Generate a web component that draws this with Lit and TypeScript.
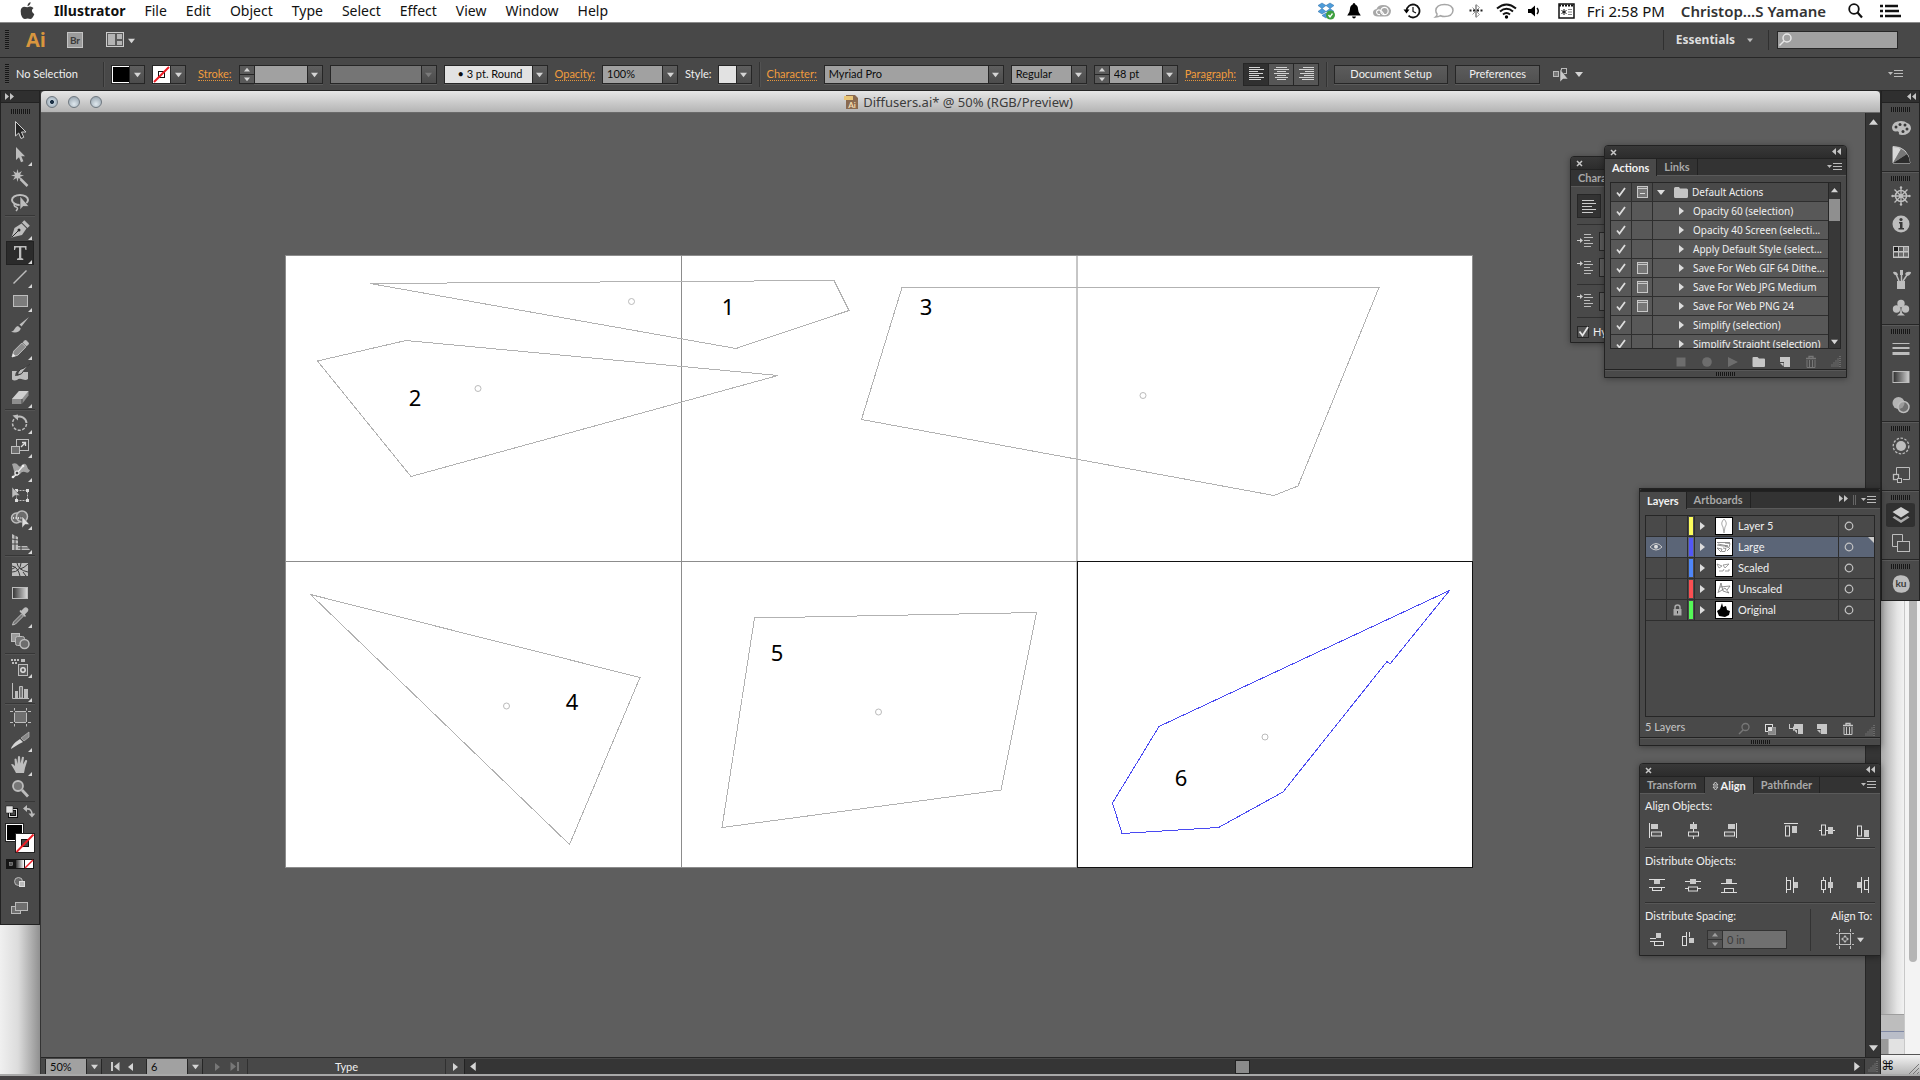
import { LitElement, html, svg, css, nothing, type TemplateResult, type SVGTemplateResult } from "lit";
import { customElement, property } from "lit/decorators.js";
import { classMap } from "lit/directives/class-map.js";

const L = "#bdbdbd";
const D = "#2b2b2b";

const ICONS: Record<string, SVGTemplateResult> = {
  select: svg`<path d="M7.5 2.5v14.500l3.200-3 2.300 5.500 2.800-1.200-2.300-5.300h4.500z" fill="#262626" stroke="#cfcfcf"/>`,
  direct: svg`<path d="M8 4v13l3-2.800 2 5 2.400-1-2.100-4.900H17z" fill="${L}"/>`,
  wand: svg`<path d="M9.500 2l1 4 3.500-2-2 3.500 4 1-4 1.200 2 3.300-3.500-2-1 4-1-4-3.500 2 2-3.500-4-1 4-1-2-3.500 3.500 2z" fill="${L}"/><path d="M12.500 12l7 7" stroke="${L}" stroke-width="2.500"/>`,
  lasso: svg`<ellipse cx="12" cy="9" rx="8" ry="5" fill="none" stroke="${L}" stroke-width="2"/><path d="M7 12q-2 3 1 4t0 4" fill="none" stroke="${L}" stroke-width="1.500"/><path d="M12 5v14l3-3.500h6z" fill="${L}" stroke="#3a3a3a" stroke-width=".6"/>`,
  pen: svg`<path d="M3.500 20.500L6.500 11l7-4.500 5 5-4.500 6.500z" fill="${L}"/><path d="M14 5.500l2.300-2.300 5.500 5.500-2.300 2.300z" fill="${L}"/><path d="M4 20l6.500-6.500" stroke="${D}"/><circle cx="11" cy="13" r="1.500" fill="${D}"/>`,
  type: svg`<path d="M6 5h12.500v4h-1l-.8-2.500h-3.400V17l2 .8V19H9v-1.200l2-.8V6.500H7.800L7 9H6z" fill="${L}"/>`,
  line: svg`<path d="M5.500 18.500l13-13" stroke="${L}" stroke-width="1.500"/>`,
  rect: svg`<rect x="5.500" y="6.500" width="14" height="11" fill="#7c7c7c" stroke="${L}"/>`,
  brush: svg`<path d="M21 4l-9.500 7.500 2 2z" fill="${L}"/><path d="M3 18.500c4 .2 3-4.500 7-5.500l2.800 2.500c-1 4.500-7 4.500-9.800 3z" fill="${L}"/>`,
  pencil: svg`<path d="M4 20l1.800-6 8-8 4 4-8 8.200z" fill="#8b8b8b" stroke="${L}"/><path d="M14.500 5.500l2-2q1-1 2 0l2 2q1 1 0 2l-2 2z" fill="${L}"/><path d="M4 20l1-3.500 2.600 2.600z" fill="#eee"/>`,
  blob: svg`<path d="M4 10h5q-2 2-2 5 5 0 8-4h5v7q-2 1.500-5 .5-4-1.500-6 .5-3 1-5-.5z" fill="${L}"/><path d="M22 3l-6 4q-4 1-5 3-1 1-1.500 4 5-.5 6-4z" fill="${L}" stroke="#3a3a3a"/>`,
  eraser: svg`<path d="M4 14L11 6h9.500v4.500L14 19H4z" fill="#8e8e8e"/><path d="M4 14L11 6h9.500L14 14z" fill="#cfcfcf"/><path d="M14 14v5" stroke="#444"/>`,
  rotate: svg`<path d="M8 6.500a7 7 0 0 1 10.500 5.500" fill="none" stroke="${L}" stroke-width="2"/><path d="M18.500 13A7 7 0 1 1 7 7" fill="none" stroke="${L}" stroke-width="1.500" stroke-dasharray="3 1.500"/><path d="M4.500 4.500l5.500-1v6z" fill="${L}"/>`,
  scale: svg`<rect x="8.500" y="4.500" width="12" height="11" fill="none" stroke="${L}"/><rect x="3.500" y="11.500" width="8" height="7" fill="#6d6d6d" stroke="${L}"/><path d="M13 12l4-4M14 7.500h3.500V11" fill="none" stroke="#ddd" stroke-width="1.300"/>`,
  warp: svg`<path d="M4 5q4-2 6 1 2 3 4 0 3-3 5 1 1 4 3 4-1 4-5 2-3-1-5 2-3 3-7 2 2-2 1-5-1-4-2-7z" fill="#a4a4a4"/><path d="M4 18q2 1 5-4l6-7" fill="none" stroke="#f0f0f0" stroke-width="1.200"/><circle cx="9" cy="14" r="2" fill="#444" stroke="#fff"/><circle cx="15" cy="7" r="1.300" fill="#eee"/><circle cx="5" cy="18" r="1.300" fill="#eee"/>`,
  free: svg`<rect x="8.500" y="7.500" width="11" height="10" fill="none" stroke="${L}" stroke-dasharray="2 1"/><path d="M7 6h3v3H7zM18 6h3v3h-3zM18 16h3v3h-3zM7 16h3v3H7z" fill="#ddd"/><path d="M4 4v11l3-2.500h5z" fill="${L}" stroke="#444" stroke-width=".5"/>`,
  builder: svg`<circle cx="8.500" cy="11" r="5" fill="#6d6d6d" stroke="${L}" stroke-width="1.500"/><circle cx="14" cy="9.500" r="5.500" fill="#6d6d6d" stroke="${L}" stroke-width="1.500"/><path d="M5 11h9" stroke="#fff" stroke-dasharray="1 1.500" stroke-width="1.500"/><path d="M14 9v12l3-3.500h4.500z" fill="#ddd" stroke="#444" stroke-width=".5"/>`,
  perspective: svg`<path d="M4 3l6 3v9h9l3 4H4z" fill="${L}"/><path d="M7 4v15M4 8l6 1M4 13h6M13 15v4M10 17h11" stroke="#474747"/>`,
  mesh: svg`<rect x="4" y="6" width="16" height="13" fill="${L}"/><path d="M4 9q6 1 8 10M4 15q8 0 9-9M9 6q1 7 11 9M12 12q4-1 8-5M8 10l-4 2M15 15l3 4" fill="none" stroke="#3c3c3c"/>`,
  gradient: svg`<defs><linearGradient id="g"><stop offset="0" stop-color="#333"/><stop offset="1" stop-color="#ddd"/></linearGradient></defs><rect x="4.500" y="6.500" width="15" height="11" fill="url(#g)" stroke="${L}"/>`,
  eyedrop: svg`<path d="M4.500 20l1-3 8-8 2 2-8 8z" fill="#777" stroke="${L}"/><path d="M12 7l5 5 1-1-1.200-1.400 3-3q1.500-2-.3-3.600t-3.500 0l-2.700 2.700L12.500 5l-1 1z" fill="${L}"/>`,
  blend: svg`<rect x="3.500" y="4.500" width="8" height="8" fill="#9a9a9a" stroke="${L}"/><rect x="7.500" y="7.500" width="9" height="9" rx="2" fill="#777" stroke="${L}"/><circle cx="16.500" cy="15" r="4.500" fill="#6d6d6d" stroke="${L}" stroke-width="1.500"/>`,
  spray: svg`<path d="M3 4h2v2H3zM6 4h2v2H6zM9 4h2v2H9zM4 7h2v2H4zM7 7h2v2H7zM13 4h4v3h-4z" fill="${L}"/><rect x="10.500" y="9.500" width="9" height="11" fill="#5a5a5a" stroke="${L}"/><circle cx="15" cy="15" r="2.200" fill="none" stroke="#ddd" stroke-width="1.500"/>`,
  graph: svg`<path d="M4.500 4v15.500H21" fill="none" stroke="${L}"/><path d="M7 12h3v7H7zM16 10h4v9h-4z" fill="${L}"/><path d="M11.500 7.500h3V19h-3z" fill="#7b7b7b" stroke="${L}"/>`,
  artboard: svg`<rect x="6" y="7" width="13" height="10" fill="#6f6f6f"/><path d="M2 6.500h3M7 6.500h11M20 6.500h3M2 17.500h3M7 17.500h11M20 17.500h3M6.500 3v2.500M6.500 8v9M6.500 19v2.500M18.500 3v2.500M18.500 8v9M18.500 19v2.500" stroke="${L}"/>`,
  slice: svg`<path d="M21 3v5l-5 4-3-3z" fill="#888" stroke="${L}" stroke-width=".7"/><path d="M12 10l3 3-4 2-8 5q1-5 9-10z" fill="#d5d5d5"/>`,
  hand: svg`<path d="M8 20Q5 14 3 11.500q1.500-1.300 4 1.500L6.500 6q1.300-1.200 2 0l1 5L10 3.500q1-1 2 0l.5 7 1.500-6.500q1.200-.8 2 .3L15 11.500l2.500-4.500q1.500-.4 1.700 1L17 15l-1 5z" fill="${L}"/>`,
  zoom: svg`<circle cx="10" cy="9" r="5" fill="#777" stroke="${L}" stroke-width="1.800"/><path d="M14 13l6 6.500" stroke="${L}" stroke-width="2.800"/>`,

  palette: svg`<path d="M3 12q1-6 9-6 4 0 6 2 4 1 4 6-2 6-9 6-4 0-3-2.500-1-2-3-1-4 0-4-4.500z" fill="${L}"/><g fill="#3a3a3a"><circle cx="7" cy="12" r="1.500"/><circle cx="11" cy="9.500" r="1.500"/><circle cx="16" cy="10" r="1.500"/><circle cx="18" cy="14" r="1.500"/><circle cx="14" cy="16.500" r="1.500"/></g>`,
  guide: svg`<path d="M4 20V3.500q15 0 17 16.500z" fill="#8a8a8a" stroke="#ccc"/><path d="M4 20V4q5 0 8 2z" fill="#d8d8d8"/><path d="M4 20L18 11q3 4 3 9z" fill="#2c2c2c"/><path d="M4 20L12 6q4 2 6 5z" fill="#777"/>`,
  wheel: svg`<circle cx="12" cy="12" r="5.500" fill="none" stroke="${L}" stroke-width="1.500"/><circle cx="12" cy="12" r="2" fill="${L}"/><path d="M12 3v18M3 12h18M5.500 5.500l13 13M18.500 5.500l-13 13" stroke="${L}" stroke-width="1.300"/><g fill="${L}"><circle cx="12" cy="3.500" r="1.200"/><circle cx="12" cy="20.500" r="1.200"/><circle cx="3.500" cy="12" r="1.200"/><circle cx="20.500" cy="12" r="1.200"/></g>`,
  info: svg`<circle cx="12" cy="12" r="8.500" fill="${L}"/><path d="M10 10h3.500v6H15v1.500H9.500V16H11v-4.500h-1z" fill="#3a3a3a"/><circle cx="12" cy="7.500" r="1.600" fill="#3a3a3a"/>`,
  swatches: svg`<rect x="4" y="6" width="16" height="12" fill="#c4c4c4"/><path d="M5 7h4v4H5z" fill="#1c1c1c"/><path d="M10 7h4v4h-4zM5 12.500h4v4H5z" fill="#555"/><path d="M15 7h4v4h-4z" fill="#909090"/><path d="M10 12.500h4v4h-4zM15 12.500h4v4h-4z" fill="#6b6b6b"/>`,
  brushes: svg`<path d="M8 13h8v8H8z" fill="${L}"/><path d="M10 13L7 6M12.500 13V5M14 13l4-6" stroke="${L}" stroke-width="1.500"/><path d="M4 4q4-1 5 3-4 1-5-3zM11 2h3v5h-3zM16 6q1-3 6-2 0 3-4 4z" fill="${L}"/>`,
  club: svg`<g fill="${L}"><circle cx="12" cy="7.500" r="3.700"/><circle cx="7.500" cy="13" r="3.700"/><circle cx="16.500" cy="13" r="3.700"/><path d="M12 9l1 8 3 2.500H8l3-2.500z"/></g>`,
  stroke: svg`<path d="M3.500 6h17v1h-17zM3.500 10h17v2h-17zM3.500 15h17v3h-17z" fill="${L}"/>`,
  gradient2: svg`<defs><linearGradient id="h"><stop offset="0" stop-color="#2c2c2c"/><stop offset="1" stop-color="#cfcfcf"/></linearGradient></defs><rect x="4" y="6.500" width="16" height="11" fill="url(#h)" stroke="${L}"/>`,
  circles: svg`<circle cx="9.500" cy="10" r="6" fill="#b4b4b4"/><circle cx="14.500" cy="14" r="5.500" fill="#8b8b8b" fill-opacity=".6" stroke="${L}" stroke-width="1.500"/>`,
  appearance: svg`<circle cx="12" cy="12" r="5" fill="${L}"/><circle cx="12" cy="12" r="7.800" fill="none" stroke="${L}" stroke-width="1.300" stroke-dasharray="2.500 1.500"/>`,
  styles: svg`<path d="M7.500 12V5.500h13v12H14" fill="none" stroke="${L}"/><rect x="4.500" y="12.500" width="5" height="5" fill="#444" stroke="${L}" stroke-width="1.300"/><rect x="8.500" y="16.500" width="4" height="4" fill="#444" stroke="${L}"/>`,
  layers: svg`<path d="M12 4l8.500 5L12 14.500 3.500 9z" fill="#cfcfcf"/><path d="M5.500 13l6.500 4 6.500-4 2 1.500L12 20 3.500 14.500z" fill="#a9a9a9"/>`,
  artboards: svg`<path d="M8 15.500H3.500v-12h10V10" fill="none" stroke="${L}"/><rect x="8.500" y="10.500" width="12" height="10" fill="none" stroke="${L}"/>`,
  ku: svg`<path d="M3 12q0-9 8-9.500 9-.5 10.500 8 1 10-8.500 11Q3.500 22 3 12z" fill="${L}"/><text x="12" y="15.500" text-anchor="middle" font-family="Lato, sans-serif" font-weight="700" font-size="11" fill="#3a3a3a">ku</text>`,

  al: svg`<path d="M4.500 5v15" stroke="#ddd"/><rect x="6" y="6" width="7" height="5" fill="#c9c9c9"/><rect x="6.500" y="14" width="10" height="4" fill="#555" stroke="#ddd"/>`,
  ac: svg`<path d="M12.500 4v17" stroke="#ddd"/><rect x="9" y="6" width="7" height="5" fill="#c9c9c9"/><rect x="7.500" y="14" width="10" height="4" fill="#444" stroke="#ddd"/>`,
  ar: svg`<path d="M19.500 5v15" stroke="#ddd"/><rect x="11" y="6" width="7" height="5" fill="#c9c9c9"/><rect x="7.500" y="14" width="10" height="4" fill="#555" stroke="#ddd"/>`,
  at: svg`<path d="M5 5.500h14" stroke="#ddd"/><rect x="6.500" y="8" width="4" height="10" fill="#444" stroke="#ddd"/><rect x="13" y="8" width="5" height="7" fill="#c9c9c9"/>`,
  am: svg`<path d="M4 12.500h16" stroke="#ddd"/><rect x="6.500" y="7" width="4" height="10" fill="#444" stroke="#ddd"/><rect x="13" y="9" width="5" height="7" fill="#c9c9c9"/>`,
  ab: svg`<path d="M5 20.500h14" stroke="#ddd"/><rect x="6.500" y="8" width="4" height="10" fill="#444" stroke="#ddd"/><rect x="13" y="12" width="5" height="7" fill="#c9c9c9"/>`,
  dt: svg`<path d="M4 6.500h16M4 14.500h16" stroke="#ddd"/><rect x="9" y="7" width="6" height="4" fill="#c9c9c9"/><rect x="7.500" y="14.500" width="9" height="3" fill="#444" stroke="#ddd"/>`,
  dm: svg`<path d="M4 8.500h16M4 15.500h16" stroke="#ddd"/><rect x="9" y="6" width="6" height="5" fill="#c9c9c9"/><rect x="7.500" y="14" width="9" height="4" fill="#444" stroke="#ddd"/>`,
  db: svg`<path d="M4 10.500h16M4 19.500h16" stroke="#ddd"/><rect x="9" y="6" width="6" height="4" fill="#c9c9c9"/><rect x="7.500" y="15.500" width="9" height="4" fill="#444" stroke="#ddd"/>`,
  dl: svg`<path d="M7.500 4v16M14.500 4v16" stroke="#ddd"/><rect x="7.500" y="7.500" width="4" height="9" fill="#444" stroke="#ddd"/><rect x="15" y="9" width="4" height="6" fill="#c9c9c9"/>`,
  dc: svg`<path d="M8.500 4v16M15.500 4v16" stroke="#ddd"/><rect x="6.500" y="7.500" width="4" height="9" fill="#444" stroke="#ddd"/><rect x="13" y="9" width="5" height="6" fill="#c9c9c9"/>`,
  dr: svg`<path d="M10.500 4v16M17.500 4v16" stroke="#ddd"/><rect x="6" y="9" width="4" height="6" fill="#c9c9c9"/><rect x="13.500" y="7.500" width="4" height="9" fill="#444" stroke="#ddd"/>`,
  sv: svg`<path d="M5 11.500h6M5 14.500h4" stroke="#ddd"/><rect x="11" y="6" width="5" height="5" fill="#c9c9c9"/><rect x="9.500" y="14.500" width="9" height="4" fill="#444" stroke="#ddd"/>`,
  sh: svg`<path d="M10.500 5v5M13.500 5v5" stroke="#ddd"/><rect x="6.500" y="9.500" width="4" height="9" fill="#444" stroke="#ddd"/><rect x="13" y="11" width="5" height="5" fill="#c9c9c9"/>`,
  ato: svg`<rect x="6.500" y="6.500" width="11" height="11" fill="none" stroke="${L}"/><path d="M6.500 2v3M17.500 2v3M6.500 19v3M17.500 19v3M3 6.500h2M19 6.500h2M3 17.500h2M19 17.500h2" stroke="${L}"/><path d="M12 8l-2 2.500h4zM12 16l-2-2.500h4zM8 12l2.500-2v4zM16 12l-2.500-2v4z" fill="${L}"/>`,

  stop: svg`<rect x="7.500" y="7.500" width="9" height="9" fill="#6d6d6d"/>`,
  record: svg`<circle cx="12" cy="12" r="4.800" fill="#6d6d6d"/>`,
  play: svg`<path d="M7 7l10 5-10 5z" fill="#6d6d6d"/>`,
  folder: svg`<path d="M5.500 8q0-1 1-1h4l1.500 1.500h5q1 0 1 1V16q0 1-1 1H6.500q-1 0-1-1z" fill="#c6c6c6"/>`,
  page: svg`<path d="M7 7h10v10h-6v-5H7z" fill="#c6c6c6"/><path d="M7 13l3.500 3.500V13z" fill="#c6c6c6"/>`,
  sub: svg`<path d="M10 7h9v10h-5v-5h-4z" fill="#c6c6c6"/><path d="M10 13l3 3.500V13zM5 7h1v4h3V9l3 3-3 2v-2H5z" fill="#c6c6c6"/>`,
  trash: svg`<path d="M7 8.500h10M10 8V6.500h4V8" fill="none" stroke="currentColor" stroke-width="1.300"/><path d="M8 10v7.500h8V10M10.500 10v7M13.500 10v7" fill="none" stroke="currentColor"/>`,
  find: svg`<circle cx="13.500" cy="10" r="3.500" fill="none" stroke="#777" stroke-width="1.300"/><path d="M11 13l-4 4" stroke="#777" stroke-width="1.500"/>`,
  mask: svg`<rect x="7.500" y="7.500" width="7" height="7" fill="#444" stroke="#ddd"/><rect x="10.500" y="10.500" width="7" height="7" fill="#888" stroke="#999"/><rect x="10" y="10" width="4" height="4" fill="#ddd"/>`,
};

const icon = (name: string, size = 24) =>
  html`<svg width=${size} height=${size} viewBox="0 0 24 24" aria-hidden="true">${ICONS[name]}</svg>`;

const tri = (dir: "down" | "up" | "left" | "right", w = 8, color = "#d5d5d5") => {
  const p = { down: "0,2 8,2 4,7", up: "0,6 8,6 4,1", left: "6,0 6,8 1,4", right: "2,0 2,8 7,4" }[dir];
  return html`<svg width=${w} height=${w} viewBox="0 0 8 8" aria-hidden="true"><polygon points=${p} fill=${color} /></svg>`;
};

const chevrons = (flip: boolean) =>
  html`<svg width="9" height="8" viewBox="0 0 9 8" aria-hidden="true">
    <path d=${flip ? "M4 0v7L0 3.500zM9 0v7L5 3.500z" : "M0 0v7l4-3.500zM5 0v7l4-3.500z"} fill="#c4c4c4" />
  </svg>`;
const closeX = html`<svg width="7" height="7" viewBox="0 0 7 7" aria-hidden="true"><path d="M1 1l5 5M6 1L1 6" stroke="#c8c8c8" stroke-width="1.500" /></svg>`;
const menuIcon = html`<svg width="15" height="10" viewBox="0 0 15 10" aria-hidden="true">
  <path d="M0 3h5L2.500 6z" fill="#bbb" /><path d="M6 1.500h9M6 4.500h9M6 7.500h9" stroke="#bbb" />
</svg>`;
const resizeGrip = html`<svg width="11" height="11" viewBox="0 0 11 11" aria-hidden="true">
  <path d="M10 0v11M8 2.500V11M6 4.500V11M4 6.500V11M2 8.500V11" stroke="#8c8c8c" stroke-dasharray="1 1" />
</svg>`;

const shared = css`
  * { box-sizing: border-box; }
  button { font: inherit; color: inherit; background: none; border: 0; padding: 0; margin: 0; display: grid; place-items: center; }
  svg { display: block; flex: none; }
  ul { list-style: none; margin: 0; padding: 0; }
  .grip { width: 19px; height: 5px; background: repeating-linear-gradient(90deg, #161616 0 1px, #4d4d4d 1px 2px); }
`;

const fields = css`
  .combo { display: grid; grid-template-columns: 1fr 15px; height: 19px; border: 1px solid #262626; background: #a1a1a1; box-shadow: 0 1px 0 #5a5a5a; flex: none; }
  .combo > select, .combo > input { grid-area: 1 / 1 / 2 / 3; appearance: none; border: 0; border-radius: 0; background: none; outline: 0; margin: 0; min-width: 0; width: 100%; padding: 0 16px 0 4px; font: inherit; color: #0c0c0c; }
  .combo > .arrow { grid-area: 1 / 2; display: grid; place-items: center; background: linear-gradient(#5e5e5e, #4c4c4c); border-left: 1px solid #262626; pointer-events: none; }
  .combo.off { background: #757575; }
  .combo.light { background: #e2e2e2; }
  .combo.light > select { text-align: right; padding-right: 24px; }
  .step { display: flex; }
  .spin { width: 15px; height: 19px; display: grid; grid-template-rows: 1fr 1fr; border: 1px solid #262626; border-right: 0; background: #5a5a5a; }
  .spin button + button { border-top: 1px solid #262626; }
`;

const spinner = html`<span class="spin">
  <button aria-label="Increase">${tri("up", 6)}</button><button aria-label="Decrease">${tri("down", 6)}</button>
</span>`;

@customElement("mac-menu-bar")
class MacMenuBar extends LitElement {
  static styles = [shared, css`
    :host { display: flex; align-items: center; height: 23px; flex: none; background: #fff; border-bottom: 1px solid #8b8b8b; font: 14px/20px "Noto Sans", "Open Sans", sans-serif; color: #111; padding: 0 19px 0 19px; }
    nav { display: flex; gap: 19px; }
    nav .app { font-weight: 700; }
    a { color: inherit; text-decoration: none; }
    .apple { margin-right: 18px; }
    .status { display: flex; align-items: center; gap: 11px; margin-left: auto; }
    .keys { margin-left: 7px; }
    .clock { margin: 0 5px 0 1px; font-size: 15px; }
    .user { font-weight: 600; font-size: 15px; color: #333; margin-right: 11px; }
    .find { margin-right: 5px; }
  `];
  render() {
    const items = ["File", "Edit", "Object", "Type", "Select", "Effect", "View", "Window", "Help"];
    return html`
      <svg class="apple" width="17" height="20" viewBox="0 0 17 20" aria-hidden="true">
        <path d="M11.500 1q.3 3-3 4.300Q8.300 2.300 11.500 1zM8.500 6.300q3.500-1.800 6 .8-3.600 2.700.8 6.200Q13.500 18 11.300 18q-1.300-.6-2.600-.6T6 18Q3.500 18 2 13.500 0.500 6.500 5 5.800q1.800 0 3.500.5z" fill="#3c3c3c" />
      </svg>
      <nav><a class="app" href="#">Illustrator</a>${items.map((i) => html`<a href="#">${i}</a>`)}</nav>
      <div class="status">
        <svg width="19" height="18" viewBox="0 0 19 18"><g fill="#4c9ddb" stroke="#2c6ba5" stroke-width=".5"><path d="M5 1l4 2.500-4 3-4-3zM13 1l4 2.500-4 3-4-3zM5 6.500l4 3-4 2.500-4-2.500zM13 6.500l4 3-4 2.500-4-2.500zM9 11l4 2.500-4 2.500-4-2.500z"/></g><circle cx="13.500" cy="13" r="4.500" fill="#3fa03f"/><path d="M11.500 13l1.500 2 2.500-3.500" fill="none" stroke="#fff" stroke-width="1.300"/></svg>
        <svg width="14" height="16" viewBox="0 0 14 16"><path d="M7 0q1.300 0 1.300 1.500Q11 2.500 11 6t2.800 6.500H.2Q3 9.500 3 6t2.700-4.500Q5.700 0 7 0zM5 13.500h4Q8.500 15.500 7 15.500T5 13.500z"/></svg>
        <svg width="20" height="14" viewBox="0 0 20 14"><path d="M6 12.500Q1 12.500 1 8.500 1 5.500 4.500 5 6 1 11 1q6.500 0 8 5.500 0 6-6 6z" fill="#a8a8a8"/><path d="M8 10.500q-3 .5-3.500-2.500.5-2.500 3-2 2 .5 4.500 4" fill="none" stroke="#fff" stroke-width="1.200"/><circle cx="12.500" cy="7" r="3.700" fill="none" stroke="#fff" stroke-width="1.200"/></svg>
        <svg width="18" height="16" viewBox="0 0 18 16"><path d="M3.500 8a6.500 6.500 0 1 1 2 4.700" fill="none" stroke="#111" stroke-width="1.800"/><path d="M.5 6.500h6l-3 4z"/><path d="M10 4v4.500l3 1.500" fill="none" stroke="#111" stroke-width="1.200"/></svg>
        <svg width="24" height="16" viewBox="0 0 24 16"><path d="M3.500 14q2-1.500 1.500-3.300Q3.800 9.500 3.800 7.500q.6-6 8.700-6t8.500 6q-.5 6-8.500 6-2 0-4-.8-2 1.300-5 1.300z" fill="none" stroke="#a6a6a6" stroke-width="1.500"/></svg>
        <svg width="18" height="16" viewBox="0 0 18 16"><path d="M5.500 4.500l7 7L9 14.500v-13l3.500 3-7 7" fill="none" stroke="#999"/><path d="M9 2v12" stroke="#777"/><path d="M2.500 6.500h2v2h-2zM6 6.500h2v2H6zM10 6.500h2v2h-2zM13.500 6.500h2v2h-2z" fill="#222"/></svg>
        <svg width="21" height="16" viewBox="0 0 21 16"><path d="M1 5.500q9.500-8 19 0M4 8.500q6.500-5.500 13 0M7 11.500q3.500-3 7 0" fill="none" stroke="#111" stroke-width="2"/><circle cx="10.500" cy="14" r="1.700"/></svg>
        <svg width="12" height="14" viewBox="0 0 12 14"><path d="M0 5h3l4-3.500v11L3 9H0z"/><path d="M9 4q2.500 3 0 6" fill="none" stroke="#111" stroke-width="1.500"/></svg>
        <svg class="keys" width="17" height="16" viewBox="0 0 17 16"><rect x="1" y="1" width="15" height="14" fill="none" stroke="#111" stroke-width="1.500"/><path d="M1 2.500h15" stroke="#111" stroke-width="2" stroke-dasharray="2 1"/><path d="M6 6v6M3.500 7.500l5 3M8.500 7.500l-5 3" stroke="#111"/><path d="M10.500 6.500h4M10.500 9h4M10.500 11.500h4" stroke="#111" stroke-dasharray="1 1"/></svg>
        <span class="clock">Fri 2:58 PM</span>
        <span class="user">Christop...S Yamane</span>
        <svg class="find" width="15" height="16" viewBox="0 0 15 16"><circle cx="6" cy="6" r="4.800" fill="none" stroke="#111" stroke-width="1.800"/><path d="M9.500 9.500l4.500 5" stroke="#111" stroke-width="2.200"/></svg>
        <svg width="22" height="14" viewBox="0 0 22 14"><path d="M6 2h13M6 7h14M6 12h16" stroke="#111" stroke-width="2.500"/><path d="M1 2h3M1 7h3M1 12h3" stroke="#111" stroke-width="2.500"/></svg>
      </div>`;
  }
}

@customElement("ai-app-bar")
class AiAppBar extends LitElement {
  static styles = [shared, css`
    :host { display: flex; align-items: center; height: 35px; flex: none; background: #484848; border-bottom: 1px solid #272727; padding: 0 22px 0 5px; color: #dedede; }
    .vgrip { width: 4px; height: 20px; background: repeating-linear-gradient(#161616 0 1px, #4d4d4d 1px 2px); }
    .logo { font: 700 20px/28px "Open Sans", sans-serif; color: #d9963e; margin: 0 17px 0 17px; width: 24px; }
    .layout { display: flex; align-items: center; gap: 4px; margin-left: 22px; }
    .right { display: flex; align-items: center; height: 21px; margin-left: auto; }
    .essentials { display: flex; align-items: center; gap: 12px; border: solid #303030; border-width: 0 1px; padding: 0 15px 0 12px; height: 20px; font: 700 12px/16px "Noto Sans", sans-serif; margin-right: 8px; }
    .search { display: flex; align-items: center; width: 121px; height: 18px; background: #a1a1a1; border: 1px solid #272727; }
    .search input { flex: 1; min-width: 0; border: 0; background: none; outline: 0; height: 16px; }
  `];
  render() {
    return html`
      <span class="vgrip"></span>
      <span class="logo">Ai</span>
      <svg width="17" height="16" viewBox="0 0 17 16"><rect x=".5" y=".5" width="15" height="15" fill="#9b9b9b" stroke="#c4c4c4"/><text x="8" y="12" text-anchor="middle" font-family="Lato, sans-serif" font-weight="700" font-size="10" fill="#3c3c3c">Br</text></svg>
      <button class="layout" aria-label="Arrange documents">
        <svg width="18" height="16" viewBox="0 0 18 16"><rect x=".5" y=".5" width="17" height="14" fill="#5a5a5a" stroke="#ccc"/><path d="M2 2h7v11H2zM11 2h5v5h-5zM11 9h5v4h-5z" fill="#b4b4b4"/></svg>
        ${tri("down", 7)}
      </button>
      <div class="right">
        <button class="essentials">Essentials ${tri("down", 6, "#bbb")}</button>
        <label class="search">
          <svg width="16" height="14" viewBox="0 0 16 14" role="img" aria-label="Search"><circle cx="9" cy="5" r="4" fill="none" stroke="#e6e6e6" stroke-width="1.500"/><path d="M6 8l-4.500 4.500" stroke="#e6e6e6" stroke-width="1.500"/></svg>
          <input type="text" aria-label="Search" />
        </label>
      </div>`;
  }
}

@customElement("ai-control-bar")
class AiControlBar extends LitElement {
  static styles = [shared, fields, css`
    :host { display: flex; align-items: center; gap: 7px; height: 33px; flex: none; background: #484848; border-bottom: 1px solid #242424; padding: 0 17px 0 5px; font: 11px/14px Lato, "Open Sans", sans-serif; color: #f0f0f0; }
    .vgrip { width: 4px; height: 20px; background: repeating-linear-gradient(#161616 0 1px, #4d4d4d 1px 2px); }
    .state { width: 80px; }
    .sep { width: 1px; height: 25px; background: #333; box-shadow: 1px 0 0 #525252; }
    .link { color: #f29d3d; border-bottom: 1px dotted #e8963c; line-height: 12px; white-space: nowrap; }
    .lead { margin-left: 5px; }
    .pair { display: flex; align-items: center; gap: 6px; }
    .w34 { width: 34px; } .w69 { width: 69px; } .w107 { width: 107px; } .w104 { width: 104px; } .w76 { width: 76px; } .w180 { width: 180px; }
    .combo.black { background: #000; box-shadow: inset 0 0 0 1px #fff; }
    .combo.none { background: #fff; }
    .slash { grid-area: 1 / 1; pointer-events: none; }
    .aligns { display: flex; border: 1px solid #262626; }
    .aligns button { width: 24px; height: 21px; background: #565656; }
    .aligns button + button { border-left: 1px solid #262626; width: 25px; }
    .aligns button.on { background: #303030; }
    .push { height: 19px; border: 1px solid #262626; background: linear-gradient(#5c5c5c, #505050); box-shadow: 0 1px 0 #5a5a5a; }
    .setup { width: 114px; } .prefs { width: 85px; }
    .similar { display: flex; align-items: center; gap: 6px; margin-left: 5px; }
    .more { margin-left: auto; }
  `];
  private combo(id: string, label: string, value: string, cls: string) {
    return html`<span class="combo ${cls}"><select id=${id} aria-label=${label}><option>${value}</option></select><span class="arrow">${tri("down", 7, cls.includes("off") ? "#7a7a7a" : "#d5d5d5")}</span></span>`;
  }
  private lines(rows: number[][]) {
    return html`<svg width="17" height="16" viewBox="0 0 17 16">${rows.map(([a, b], i) => svg`<path d="M${a} ${1.5 + i * 2}H${b}" stroke="#d2d2d2"/>`)}</svg>`;
  }
  render() {
    return html`
      <span class="vgrip"></span><span class="state">No Selection</span><span class="sep"></span>
      ${this.combo("fill", "Fill", "", "w34 black")}
      <span class="combo w34 none"><select aria-label="Stroke colour"><option></option></select>
        <svg class="slash" width="17" height="17" viewBox="0 0 17 17"><rect x="5.500" y="5.500" width="6" height="6" fill="none" stroke="#111"/><path d="M1 16L16 1" stroke="#ec1c24" stroke-width="2"/></svg>
        <span class="arrow">${tri("down", 7)}</span></span>
      <label class="link lead" for="weight">Stroke:</label>
      <span class="step">${spinner}${this.combo("weight", "Stroke weight", "", "w69")}</span>
      ${this.combo("profile", "Width profile", "", "w107 off")}
      ${this.combo("brush", "Brush", "•   3 pt. Round", "w104 light")}
      <label class="link" for="opacity">Opacity:</label>
      ${this.combo("opacity", "Opacity", "100%", "w76")}
      <span class="pair"><label for="style">Style:</label>${this.combo("style", "Style", "", "w34 light")}</span>
      <span class="sep"></span>
      <label class="link" for="family">Character:</label>
      ${this.combo("family", "Font family", "Myriad Pro", "w180")}
      ${this.combo("face", "Font style", "Regular", "w76")}
      <span class="step">${spinner}${this.combo("size", "Font size", "48 pt", "w69")}</span>
      <span class="link">Paragraph:</span>
      <span class="aligns">
        <button class="on" aria-label="Align left">${this.lines([[1, 12], [1, 16], [1, 10], [1, 15], [1, 11], [1, 16], [1, 13]])}</button>
        <button aria-label="Align center">${this.lines([[3, 14], [1, 16], [4, 13], [1, 16], [4, 13], [2, 15], [4, 13]])}</button>
        <button aria-label="Align right">${this.lines([[5, 16], [1, 16], [7, 16], [2, 16], [6, 16], [1, 16], [4, 16]])}</button>
      </span>
      <span class="sep"></span>
      <button class="push setup">Document Setup</button>
      <button class="push prefs">Preferences</button>
      <button class="similar" aria-label="Select similar objects">
        <svg width="17" height="17" viewBox="0 0 17 17"><rect x="1.500" y="5.500" width="5" height="5" fill="#777" stroke="#bbb"/><rect x="9.500" y="2.500" width="5" height="5" fill="none" stroke="#bbb"/><path d="M8 3v13l3-3h5z" fill="#c9c9c9" stroke="#444" stroke-width=".5"/></svg>
        ${tri("down", 8)}
      </button>
      <button class="more" aria-label="Panel menu">${menuIcon}</button>`;
  }
}

const TOOL_GROUPS: [string, string, boolean][][] = [
  [["select", "Selection", false], ["direct", "Direct selection", true], ["wand", "Magic wand", false], ["lasso", "Lasso", false]],
  [["pen", "Pen", true], ["type", "Type", true], ["line", "Line segment", true], ["rect", "Rectangle", true], ["brush", "Paintbrush", false], ["pencil", "Pencil", true], ["blob", "Blob brush", false], ["eraser", "Eraser", true]],
  [["rotate", "Rotate", true], ["scale", "Scale", true], ["warp", "Width", true], ["free", "Free transform", false], ["builder", "Shape builder", true], ["perspective", "Perspective grid", true]],
  [["mesh", "Mesh", false], ["gradient", "Gradient", false], ["eyedrop", "Eyedropper", true], ["blend", "Blend", false]],
  [["spray", "Symbol sprayer", true], ["graph", "Column graph", true]],
  [["artboard", "Artboard", false], ["slice", "Slice", true], ["hand", "Hand", true], ["zoom", "Zoom", false]],
];

@customElement("ai-toolbox")
class AiToolbox extends LitElement {
  static styles = [shared, css`
    :host { display: flex; flex-direction: column; background: #494949; border: solid #222; border-width: 0 1px 1px 1px; padding-bottom: 5px; }
    .head { height: 12px; background: #2f2f2f; border-bottom: 1px solid #222; padding: 2px 4px; }
    .top { display: grid; place-items: center; height: 16px; }
    .group { display: grid; justify-items: center; }
    .group + .group { border-top: 1px solid #363636; box-shadow: inset 0 1px 0 #535353; padding-top: 1px; margin: 0 4px; }
    .group button { width: 28px; height: 24px; position: relative; }
    .group button.on { background: #2b2b2b; outline: 1px solid #222; outline-offset: -1px; }
    .fly::after { content: ""; position: absolute; right: 2px; bottom: 1px; border: solid transparent; border-width: 2px; border-right-color: #d8d8d8; border-bottom-color: #d8d8d8; }
    .foot { border-top: 1px solid #363636; margin: 0 4px; display: grid; justify-items: center; }
  `];
  render() {
    return html`
      <div class="head">${chevrons(false)}</div>
      <div class="top"><span class="grip"></span></div>
      ${TOOL_GROUPS.map((g) => html`<div class="group">${g.map(([n, l, fly]) => html`<button aria-label=${l} class=${classMap({ fly, on: n === "type" })}>${icon(n)}</button>`)}</div>`)}
      <div class="foot">
        <svg width="30" height="117" viewBox="0 0 30 117" role="img" aria-label="Fill, stroke and screen modes">
          <rect x="4.500" y="7.500" width="7" height="7" fill="none" stroke="#111" stroke-width="3"/><rect x="4.500" y="7.500" width="7" height="7" fill="none" stroke="#ddd"/><path d="M1 4h7v7H1z" fill="#e2e2e2" stroke="#111" stroke-width=".5"/>
          <path d="M21 7q6-1 6 6" fill="none" stroke="#bbb" stroke-width="1.500"/><path d="M22 3v7l-4-3.500zM23.500 11.500h7l-3.500 4z" fill="#bbb"/>
          <rect x=".5" y="21.500" width="18" height="18" fill="#fff" stroke="#222"/><rect x="2" y="23" width="15" height="15" fill="#000"/>
          <rect x="10.500" y="31.500" width="19" height="19" fill="#fff" stroke="#222"/><rect x="16.500" y="37.500" width="7" height="7" fill="#4a4a4a" stroke="#111"/><path d="M11.500 50l17-17.500" stroke="#ee1c25" stroke-width="1.800"/>
          <defs><linearGradient id="m"><stop offset="0" stop-color="#333"/><stop offset="1" stop-color="#fff"/></linearGradient></defs>
          <rect x="1" y="57" width="28" height="10" fill="#151515"/><rect x="4.500" y="60.500" width="3" height="3" fill="#555" stroke="#aaa" stroke-width=".5"/><rect x="11" y="58" width="8" height="8" fill="url(#m)"/><rect x="20" y="58" width="8" height="8" fill="#fff"/><path d="M20 66l8-8" stroke="#ee1c25" stroke-width="1.500"/>
          <circle cx="13.500" cy="79.500" r="4" fill="#6a6a6a" stroke="#bbb"/><rect x="14.500" y="79.500" width="5" height="5" fill="#bbb" stroke="#ddd"/>
          <rect x="6.500" y="104.500" width="9" height="7" fill="#6f6f6f" stroke="#bbb"/><rect x="10.500" y="100.500" width="12" height="8" fill="#6f6f6f" stroke="#bbb"/>
        </svg>
      </div>`;
  }
}

const DOCK: [string, string][][] = [
  [["palette", "Color"], ["guide", "Color guide"]],
  [["wheel", "Kuler"], ["info", "Info"], ["swatches", "Swatches"], ["brushes", "Brushes"], ["club", "Symbols"]],
  [["stroke", "Stroke"], ["gradient2", "Gradient"], ["circles", "Transparency"]],
  [["appearance", "Appearance"], ["styles", "Graphic styles"]],
  [["layers", "Layers"], ["artboards", "Artboards"]],
  [["ku", "Kuler"]],
];

@customElement("ai-dock")
class AiDock extends LitElement {
  static styles = [shared, css`
    :host { display: flex; flex-direction: column; background: #494949; border: solid #222; border-width: 0 1px 1px; }
    .head { height: 12px; background: #2f2f2f; border-bottom: 1px solid #222; padding: 2px 3px; display: flex; justify-content: flex-end; }
    section { display: grid; justify-items: center; padding-bottom: 2px; }
    section + section { border-top: 1px solid #262626; box-shadow: inset 0 1px 0 #5a5a5a; }
    .grip { margin: 4px 0 1px; }
    button { width: 29px; height: 28px; }
    .on { background: #303030; border: solid #494949; border-width: 2px 0; border-radius: 4px; }
  `];
  render() {
    return html`<div class="head">${chevrons(true)}</div>
      ${DOCK.map((g) => html`<section><span class="grip"></span>${g.map(([n, l]) => html`<button aria-label=${l} class=${classMap({ on: n === "layers" })}>${icon(n, n === "ku" ? 22 : 24)}</button>`)}</section>`)}`;
  }
}

const SHAPES = ["370,283.5 834,280.5 849,310.5 736,348.5", "317.5,361 406,340.5 778,375.5 411,476.5", "902,287.5 1379,287.5 1298,486 1274,495.5 861.5,419.5", "310.5,594.5 640,677.5 569.5,844.5", "754.5,618 1036.5,612.5 1001,790 722,827.5"];
const CENTERS = [[631.5, 301.5], [478, 388.5], [1143, 395.5], [506.5, 706], [878.5, 712], [1265, 737]];
const LABELS: [number, number][] = [[728, 315], [415, 406], [926, 315], [572, 710], [777, 661], [1181, 786]];

@customElement("ai-document")
class AiDocument extends LitElement {
  static styles = [shared, fields, css`
    :host { display: flex; flex-direction: column; min-width: 0; border-left: 1px solid #333; border-right: 1px solid #262626; font: 11px/14px Lato, "Open Sans", sans-serif; color: #f0f0f0; }
    .title { display: grid; grid-template-columns: 1fr auto 1fr; align-items: center; height: 22px; background: linear-gradient(#e6e6e6, #b4b4b4); border-bottom: 1px solid #6a6a6a; padding: 0 9px 0 5px; border-radius: 4px 4px 0 0; }
    .lights { display: flex; gap: 10px; }
    .lights button { width: 12px; height: 12px; border-radius: 50%; border: 1px solid #6f7880; background: radial-gradient(circle at 50% 70%, #dfe8ee, #8d9ba6); }
    .lights button:first-child { background: radial-gradient(circle, #1d3146 25%, #c4d0d9 32%, #93a2ae); }
    .name { display: flex; align-items: center; gap: 4px; font: 13px/18px "Noto Sans", sans-serif; color: #3c3c3c; }
    .view { flex: 1; display: flex; min-height: 0; }
    .canvas { flex: 1; min-width: 0; background: #5e5e5e; }
    .canvas > svg { width: 100%; height: 100%; }
    .vbar { width: 15px; background: #353535; border-left: 1px solid #262626; display: flex; flex-direction: column; justify-content: space-between; align-items: center; padding: 5px 0; }
    .status { display: flex; height: 17px; background: #484848; border-top: 1px solid #262626; align-items: stretch; padding: 1px 0 0 4px; }
    .status .combo { height: 15px; border-width: 0 1px; box-shadow: none; }
    .zoom { width: 57px; } .board { width: 57px; margin: 0 10px 0 11px; }
    .nav { display: flex; align-items: center; gap: 9px; }
    .back { padding-left: 9px; gap: 7px; }
    .tool { width: 199px; border: solid #303030; border-width: 0 1px; margin-left: 8px; display: grid; place-items: center; }
    .pop { width: 19px; border-right: 1px solid #222; }
    .hbar { flex: 1; display: grid; grid-template-columns: 16px 768fr 15px 610fr 16px; background: #353535; align-items: center; }
    .thumb { height: 14px; background: #8b8b8b; border: 1px solid #222; grid-column: 3; }
    .hbar .end { grid-column: 5; }
    .corner { width: 16px; display: grid; place-items: center; border-left: 1px solid #262626; }
  `];
  render() {
    return html`
      <div class="title">
        <span class="lights"><button aria-label="Close"></button><button aria-label="Minimize"></button><button aria-label="Zoom"></button></span>
        <span class="name">
          <svg width="15" height="16" viewBox="0 0 15 16"><path d="M2 1h9l3 3v11H2z" fill="#8a6a50"/><path d="M0 2h9v4H0z" fill="#e9c577"/><text x="8" y="14" text-anchor="middle" font-family="Lato, sans-serif" font-weight="700" font-size="8" fill="#f5dcb0">Ai</text></svg>
          Diffusers.ai* @ 50% (RGB/Preview)
        </span>
      </div>
      <div class="view">
        <div class="canvas">
          <svg viewBox="41 113 1824 944" preserveAspectRatio="xMidYMid meet" role="img" aria-label="Artboards">
            <rect x="286" y="256" width="1187" height="612" fill="#fff"/>
            <g fill="none" stroke="#8c8c8c"><rect x="285.500" y="255.500" width="1187" height="612"/><path d="M286 561.500H1473M681.500 256V868M1077 256V868"/></g>
            <g fill="none" stroke="#b2b2b2" shape-rendering="crispEdges">
              ${SHAPES.map((p) => svg`<polygon points=${p}/>`)}
            </g>
            <g fill="none" stroke="#a9a9a9" stroke-width=".8">
              ${CENTERS.map(([x, y]) => svg`<circle cx=${x} cy=${y} r="3"/>`)}
            </g>
            <polygon points="1449.500,590.500 1390,664 1387,661.500 1283,792 1218.500,827.500 1122,833.500 1112.500,803 1159,726.500" fill="none" stroke="#4a4af2" shape-rendering="crispEdges"/>
            <rect x="1077.500" y="561.500" width="395" height="306" fill="none" stroke="#111"/>
            <g font-family="Noto Sans, Open Sans, sans-serif" font-size="22" fill="#000" text-anchor="middle">
              ${LABELS.map(([x, y], i) => svg`<text x=${x} y=${y}>${i + 1}</text>`)}
            </g>
          </svg>
        </div>
        <div class="vbar"><button aria-label="Scroll up">${tri("up", 9)}</button><button aria-label="Scroll down">${tri("down", 9)}</button></div>
      </div>
      <div class="status">
        <span class="combo zoom"><select aria-label="Zoom level"><option>50%</option></select><span class="arrow">${tri("down", 7)}</span></span>
        <span class="nav back"><button aria-label="First"><svg width="9" height="9" viewBox="0 0 9 9"><path d="M0 0h2v9H0zM8.500 0v9L3 4.500z" fill="#ccc"/></svg></button><button aria-label="Previous">${tri("left", 8)}</button></span>
        <span class="combo board"><select aria-label="Artboard"><option>6</option></select><span class="arrow">${tri("down", 7)}</span></span>
        <span class="nav"><button aria-label="Next">${tri("right", 8, "#777")}</button><button aria-label="Last"><svg width="9" height="9" viewBox="0 0 9 9"><path d="M7 0h2v9H7zM.5 0v9L6 4.500z" fill="#777"/></svg></button></span>
        <span class="tool">Type</span>
        <button class="pop" aria-label="Status menu">${tri("right", 8)}</button>
        <div class="hbar"><button aria-label="Scroll left">${tri("left", 9)}</button><span class="thumb"></span><button class="end" aria-label="Scroll right">${tri("right", 9)}</button></div>
        <span class="corner">${resizeGrip}</span>
      </div>`;
  }
}

@customElement("ai-panel")
class AiPanel extends LitElement {
  @property({ attribute: false }) tabs: string[] = [];
  @property({ type: Number }) active = 0;
  @property({ type: Boolean }) slim = false;
  @property({ type: Boolean }) arrow = false;
  @property({ type: Boolean }) plain = false;
  static styles = [shared, css`
    :host { display: block; background: #494949; border: 1px solid #222; border-radius: 4px 4px 0 0; box-shadow: 0 1px 6px rgba(0, 0, 0, .35); font: 11px/14px Lato, "Open Sans", sans-serif; color: #f0f0f0; }
    .head { display: flex; justify-content: space-between; align-items: center; height: 12px; background: linear-gradient(#383838, #2c2c2c); padding: 0 5px; border-radius: 3px 3px 0 0; }
    .head.slim { height: 2px; background: #1f1f1f; }
    .tabs { display: flex; height: 18px; background: #333; border-top: 1px solid #222; border-bottom: 1px solid #5a5a5a; }
    .tabs button { padding: 0 7px; color: #a8a8a8; font-weight: 700; border-right: 1px solid #222; height: 16px; display: flex; gap: 2px; align-items: center; }
    .tabs button.on { background: #494949; color: #f2f2f2; height: 17px; }
    .menu { margin: 3px 4px 0 auto; display: flex; gap: 5px; }
    .grab { height: 8px; border-top: 1px solid #222; box-shadow: inset 0 1px 0 #585858; display: grid; place-items: center; }
    .grab .grip { height: 4px; }
  `];
  render() {
    return html`
      <div class="head ${this.slim ? "slim" : ""}">${this.slim ? nothing : html`${closeX}${chevrons(true)}`}</div>
      <div class="tabs">
        ${this.tabs.map((t, i) => html`<button class=${i === this.active ? "on" : ""}>${this.plain && i === this.active ? html`<svg width="7" height="10" viewBox="0 0 7 10"><path d="M1 4l2.500-3L6 4zM1 6l2.500 3L6 6z" fill="none" stroke="#ccc"/></svg>` : nothing}${t}</button>`)}
        <span class="menu">${this.slim ? html`${chevrons(false)}<svg width="3" height="10"><path d="M.5 0v10M2.500 0v10" stroke="#666"/></svg>` : nothing}${menuIcon}</span>
      </div>
      <slot></slot>
      ${this.arrow ? html`<div class="grab"><span class="grip"></span></div>` : nothing}`;
  }
}

const ACTIONS: [string, number][] = [["Opacity 60 (selection)", 0], ["Opacity 40 Screen (selecti...", 0], ["Apply Default Style (select...", 0], ["Save For Web GIF 64 Dithe...", 1], ["Save For Web JPG Medium", 1], ["Save For Web PNG 24", 1], ["Simplify (selection)", 0], ["Simplify Straight (selection)", 0]];

@customElement("ai-actions")
class AiActions extends LitElement {
  static styles = [shared, css`
    :host { display: block; padding: 6px 5px 0 5px; }
    .list { display: flex; height: 167px; border: 1px solid #262626; }
    ul { flex: 1; min-width: 0; overflow: hidden; background: #585858; font: 10px/14px "Noto Sans", "Open Sans", sans-serif; }
    li { display: grid; grid-template-columns: 21px 21px 1fr; height: 19px; border-bottom: 1px solid #2e2e2e; align-items: stretch; white-space: nowrap; }
    li.set { background: #494949; }
    .cell { display: grid; place-items: center; border-right: 1px solid #2e2e2e; }
    .cell > * { grid-area: 1 / 1; }
    input { appearance: none; margin: 0; width: 12px; height: 12px; }
    .name { display: flex; align-items: center; gap: 8px; padding-left: 24px; }
    .set .name { padding-left: 4px; gap: 4px; }
    .set .name svg + svg { margin-left: 5px; }
    .bar { width: 12px; background: #383838; border-left: 1px solid #262626; display: grid; grid-template-rows: 15px 23px 1fr 13px; justify-items: center; align-items: center; }
    .thumb { width: 11px; height: 22px; background: #8f8f8f; }
    .bar svg:last-child { grid-row: 4; }
    .foot { display: flex; align-items: center; gap: 2px; height: 20px; padding-left: 59px; color: #777; }
    .foot > svg { margin: 5px 0 0 auto; }
    .foot button { width: 24px; height: 19px; }
  `];
  private check(label: string) {
    return html`<label class="cell"><input type="checkbox" checked aria-label=${label} /><svg width="10" height="10" viewBox="0 0 10 10"><path d="M1 5.500l2.500 3L9 1" fill="none" stroke="#ddd" stroke-width="1.800"/></svg></label>`;
  }
  private dialog(minus = false) {
    return html`<svg width="11" height="12" viewBox="0 0 11 12"><rect x=".5" y=".5" width="10" height="11" fill="#777" stroke="#c8c8c8"/><path d="M1 2.500h9" stroke="#c8c8c8"/>${minus ? svg`<path d="M3 7.500h5" stroke="#ddd"/>` : nothing}</svg>`;
  }
  render() {
    return html`
      <div class="list">
        <ul>
          <li class="set">${this.check("Default Actions")}<span class="cell">${this.dialog(true)}</span>
            <span class="name">${tri("down", 8, "#ddd")}<svg width="14" height="11" viewBox="0 0 14 11"><path d="M0 1.500Q0 0 1.500 0H5l1 1.500h6.500Q14 1.500 14 3v6.500q0 1.500-1.500 1.500h-11Q0 11 0 9.500z" fill="#c4c4c4"/></svg>Default Actions</span></li>
          ${ACTIONS.map(([n, d]) => html`<li>${this.check(n)}<span class="cell">${d ? this.dialog() : nothing}</span><span class="name">${tri("right", 8, "#ddd")}${n}</span></li>`)}
        </ul>
        <div class="bar">${tri("up", 7)}<span class="thumb"></span>${tri("down", 7)}</div>
      </div>
      <div class="foot">${["stop", "record", "play", "folder", "page", "trash"].map((n) => html`<button aria-label=${n}>${icon(n)}</button>`)}${resizeGrip}</div>`;
  }
}

const LAYERS: { name: string; color: string; art: SVGTemplateResult; on?: boolean; lock?: boolean }[] = [
  { name: "Layer 5", color: "#fdfd5c", art: svg`<path d="M8 1q-4 4-1 8l1 6 1-6q3-4-1-8z" fill="none" stroke="#aaa"/>` },
  { name: "Large", color: "#5257f7", on: true, art: svg`<path d="M1 3.500h13M2 5l10 2H7L1 6M9 4l5 .5-1 4-4-1M1 9l5 1-1 3zM7 9l3 .5-1 3H6M11 12l3-3" fill="none" stroke="#777" stroke-width=".8"/>` },
  { name: "Scaled", color: "#4f86f8", art: svg`<path d="M1 4l5 2-3 2zM7 5l6-1-4 4zM3 11h4l1-2M9 11h4V9" fill="none" stroke="#888" stroke-width=".8"/>` },
  { name: "Unscaled", color: "#fb4f52", art: svg`<path d="M2 12L5 2l2 8 6 2-4-5-6 4M4 6l10-1-3 4" fill="none" stroke="#777" stroke-width=".8"/>` },
  { name: "Original", color: "#54f957", lock: true, art: svg`<path d="M6 1l1 4 3-1 1 4 3 1-1 4-4 2-6-1-2-5 3-2z" fill="#000"/>` },
];

@customElement("ai-layers")
class AiLayers extends LitElement {
  static styles = [shared, css`
    :host { display: block; padding: 6px 5px 0; }
    .list { min-height: 202px; border: 1px solid #262626; }
    li { display: grid; grid-template-columns: 21px 21px 6px 1fr 35px; height: 21px; border-bottom: 1px solid #2e2e2e; }
    li.on { background: #5b6577; }
    .cell { display: grid; place-items: center; border-right: 1px solid #2e2e2e; }
    .swatch { margin: 1px 1px 1px 1px; }
    .name { display: flex; align-items: center; border: solid #2e2e2e; border-width: 0 1px; padding-left: 3px; }
    .thumb { width: 18px; height: 18px; border: 1px solid #000; background: #fff; margin: 0 5px 0 9px; }
    .target { position: relative; display: flex; align-items: center; padding-left: 5px; }
    .on .target::after { content: ""; position: absolute; top: 0; right: 0; border: 3px solid transparent; border-top-color: #ccc; border-right-color: #ccc; }
    .foot { display: flex; align-items: center; gap: 2px; height: 20px; color: #c6c6c6; }
    .foot span { flex: 1; }
    .foot button { width: 24px; height: 20px; }
    .foot > svg { margin: 6px 0 0 2px; }
  `];
  render() {
    return html`
      <ul class="list">${LAYERS.map((l) => html`<li class=${l.on ? "on" : ""}>
        <button class="cell" aria-label="Toggle visibility">${l.on ? html`<svg width="12" height="10" viewBox="0 0 12 10"><path d="M0 5q6-7 12 0-6 6-12 0z" fill="#5b6577" stroke="#ccc"/><circle cx="6" cy="4.800" r="2" fill="#ddd"/></svg>` : nothing}</button>
        <button class="cell" aria-label="Toggle lock">${l.lock ? html`<svg width="9" height="12" viewBox="0 0 9 12"><path d="M2 6V3.500q0-2.500 2.500-2.500T7 3.500V6" fill="none" stroke="#aaa" stroke-width="1.500"/><rect x=".5" y="5" width="8" height="6.500" fill="#aaa"/><path d="M4.500 7v2.500" stroke="#333"/></svg>` : nothing}</button>
        <span class="swatch" style="background:${l.color}"></span>
        <span class="name">${tri("right", 8, "#ddd")}<span class="thumb"><svg width="16" height="16" viewBox="0 0 16 16">${l.art}</svg></span>${l.name}</span>
        <button class="target" aria-label="Target ${l.name}"><svg width="10" height="10" viewBox="0 0 10 10"><circle cx="5" cy="5" r="3.800" fill="none" stroke="#c4c4c4" stroke-width="1.200"/></svg></button>
      </li>`)}</ul>
      <div class="foot"><span>5 Layers</span>${["find", "mask", "sub", "page", "trash"].map((n) => html`<button aria-label=${n}>${icon(n)}</button>`)}${resizeGrip}</div>`;
  }
}

@customElement("ai-align")
class AiAlign extends LitElement {
  static styles = [shared, fields, css`
    :host { display: block; padding: 5px 5px 4px; }
    h3 { margin: 0; font: inherit; }
    .row { display: flex; justify-content: space-between; padding: 5px 0 5px; }
    .set { display: flex; gap: 12px; }
    .block { border-bottom: 1px solid #303030; box-shadow: 0 1px 0 #575757; margin-bottom: 6px; height: 49px; }
    .left { flex: 1; }
    .last { display: flex; }
    .spacing { display: flex; align-items: center; gap: 7px; padding: 4px 0 0; }
    .spin, .value { opacity: .6; }
    .value { width: 65px; height: 19px; border: 1px solid #262626; background: #8a8a8a; color: #333; font: inherit; padding: 0 4px; margin: 0; }
    .to { border-left: 1px solid #333; padding-left: 20px; height: 42px; width: 65px; }
    .to button { display: flex; align-items: center; padding: 4px 0 0 2px; }
  `];
  private row(a: string[], b: string[]) {
    const s = (n: string[]) => html`<span class="set">${n.map((i) => html`<button aria-label=${i}>${icon(i)}</button>`)}</span>`;
    return html`<div class="row">${s(a)}${s(b)}</div>`;
  }
  render() {
    return html`
      <div class="block"><h3>Align Objects:</h3>${this.row(["al", "ac", "ar"], ["at", "am", "ab"])}</div>
      <div class="block"><h3>Distribute Objects:</h3>${this.row(["dt", "dm", "db"], ["dl", "dc", "dr"])}</div>
      <div class="last">
        <div class="left"><label for="gap">Distribute Spacing:</label>
          <div class="spacing"><button aria-label="Vertical">${icon("sv")}</button><button aria-label="Horizontal">${icon("sh")}</button>
            <span class="step">${spinner}<input class="value" id="gap" value="0 in" disabled /></span></div></div>
        <div class="to"><span>Align To:</span><button aria-label="Align to artboard">${icon("ato")}${tri("down", 7)}</button></div>
      </div>`;
  }
}

@customElement("ai-paragraph")
class AiParagraph extends LitElement {
  static styles = [shared, css`
    :host { display: grid; padding: 7px 6px 0; align-content: start; justify-items: start; }
    .al { width: 24px; height: 24px; background: #333; border: 1px solid #262626; margin-bottom: 3px; }
    .row { display: flex; gap: 6px; align-items: center; height: 27px; }
    .first { border-top: 1px solid #303030; margin-top: 3px; padding-top: 3px; width: 200px; height: 30px; }
    .box { width: 15px; height: 19px; border: 1px solid #262626; background: #5a5a5a; }
    .hy { gap: 4px; height: 25px; }
    .hy input { appearance: none; width: 12px; height: 12px; margin: 0; border: 1px solid #262626; background: #555; grid-area: 1/1; }
    .tick { display: grid; } .tick svg { grid-area: 1/1; }
  `];
  private ind(y: number) {
    return html`<svg width="16" height="16" viewBox="0 0 16 16"><path d="M0 ${y}h5" stroke="#ccc"/><path d="M3 ${y - 2.5}l3 2.500-3 2.500z" fill="#ccc"/><path d="M7 1.500h7M7 4.500h9M7 7.500h6M7 10.500h9M7 13.500h7" stroke="#bbb"/></svg>`;
  }
  render(): TemplateResult {
    return html`
      <button class="al" aria-label="Align left"><svg width="14" height="15" viewBox="0 0 14 15"><path d="M0 1.500h12M0 4.500h14M0 7.500h10M0 10.500h14M0 13.500h11" stroke="#ccc"/></svg></button>
      <div class="row first">${this.ind(7.5)}<button class="box" aria-label="Left indent"></button></div>
      <div class="row">${this.ind(3.5)}<button class="box" aria-label="First line indent"></button></div>
      <div class="row first">${this.ind(3.5)}<button class="box" aria-label="Space before"></button></div>
      <label class="row first hy"><span class="tick"><input type="checkbox" checked /><svg width="12" height="12" viewBox="0 0 12 12"><path d="M2.500 5.500l3 4L11 1" fill="none" stroke="#e5e5e5" stroke-width="1.800"/></svg></span>Hyphenate</label>`;
  }
}

@customElement("app-root")
class AppRoot extends LitElement {
  static styles = [shared, css`
    :host { display: flex; flex-direction: column; height: 100vh; min-height: 960px; overflow: hidden; background: #494949; }
    .work { flex: 1; position: relative; display: flex; min-height: 0; }
    .side { display: flex; flex-direction: column; width: 40px; }
    .right { width: 39px; }
    .behind { flex: 1; background: linear-gradient(90deg, #f0f0f0, #dcdcdc 45%, #909090); }
    ai-document { flex: 1; }
    .page { flex: 1; display: grid; grid-template-columns: 24px 1fr; }
    .sheet { background: linear-gradient(90deg, #a8a8a8, #e4e4e4 70%, #f2f2f2); border-right: 1px solid #c8c8c8; display: flex; flex-direction: column; justify-content: flex-end; }
    .sheet i { display: block; height: 17px; background: #bdbdbd; border-top: 1px solid #9d9d9d; }
    .sheet i + i { height: 8px; background: #b9bdc8; border-color: #7f88a4; }
    .sheet i + i + i { height: 15px; background: linear-gradient(90deg, #9a9a9a 30%, #e2e2e2 36%); border: 0; }
    .scroll { background: #f3f3f3; padding: 0 3px 92px 4px; }
    .scroll i { display: block; height: 100%; background: #b5b5b5; border-radius: 0 0 4px 4px; }
    .cmd { height: 20px; border-top: 1px solid #555; background: linear-gradient(#f4f4f4, #b5b5b5); font: 13px/22px "DejaVu Sans", sans-serif; color: #111; display: flex; justify-content: space-between; }
    .edge { height: 6px; flex: none; background: linear-gradient(#a9a9a9 0 2px, #454244 2px); }
    ai-panel { position: absolute; }
    .para { top: 65px; right: 120px; width: 230px; }
    .actions { top: 54px; right: 73px; width: 243px; }
    .layers { top: 397px; right: 39px; width: 242px; border-radius: 0; }
    .align { top: 672px; right: 39px; width: 242px; }
  `];
  render() {
    return html`
      <mac-menu-bar></mac-menu-bar>
      <ai-app-bar></ai-app-bar>
      <ai-control-bar></ai-control-bar>
      <main class="work">
        <div class="side"><ai-toolbox></ai-toolbox><div class="behind"></div></div>
        <ai-document></ai-document>
        <div class="side right"><ai-dock></ai-dock>
          <div class="page"><div class="sheet"><i></i><i></i><i></i></div><div class="scroll"><i></i></div></div>
          <div class="cmd">⌘<svg width="11" height="20" viewBox="0 0 11 20"><path d="M0 19L10 9M4 19l6-6M8 19l2-2" stroke="#777"/></svg></div>
        </div>
        <ai-panel class="para" .tabs=${["Character"]} active="9"><ai-paragraph></ai-paragraph></ai-panel>
        <ai-panel class="actions" .tabs=${["Actions", "Links"]} arrow><ai-actions></ai-actions></ai-panel>
        <ai-panel class="layers" .tabs=${["Layers", "Artboards"]} slim arrow><ai-layers></ai-layers></ai-panel>
        <ai-panel class="align" .tabs=${["Transform", "Align", "Pathfinder"]} active="1" plain><ai-align></ai-align></ai-panel>
      </main>
      <div class="edge"></div>`;
  }
}
